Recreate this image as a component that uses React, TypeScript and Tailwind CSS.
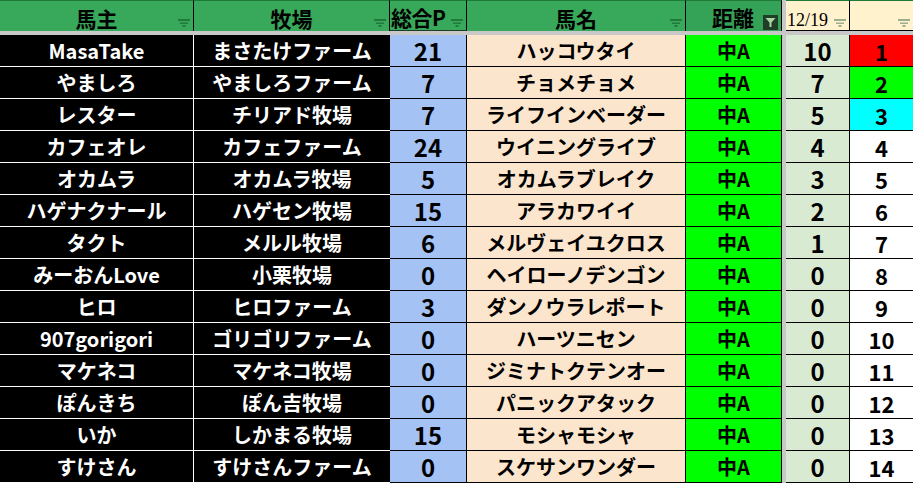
import React from "react";

const rows: [string, string, string, string, string, string][] = [
  ["MasaTake", "まさたけファーム", "21", "ハッコウタイ", "10", "1"],
  ["やましろ", "やましろファーム", "7", "チョメチョメ", "7", "2"],
  ["レスター", "チリアド牧場", "7", "ライフインベーダー", "5", "3"],
  ["カフェオレ", "カフェファーム", "24", "ウイニングライブ", "4", "4"],
  ["オカムラ", "オカムラ牧場", "5", "オカムラブレイク", "3", "5"],
  ["ハゲナクナール", "ハゲセン牧場", "15", "アラカワイイ", "2", "6"],
  ["タクト", "メルル牧場", "6", "メルヴェイユクロス", "1", "7"],
  ["みーおんLove", "小栗牧場", "0", "ヘイローノデンゴン", "0", "8"],
  ["ヒロ", "ヒロファーム", "3", "ダンノウラレポート", "0", "9"],
  ["907gorigori", "ゴリゴリファーム", "0", "ハーツニセン", "0", "10"],
  ["マケネコ", "マケネコ牧場", "0", "ジミナトクテンオー", "0", "11"],
  ["ぽんきち", "ぽん吉牧場", "0", "パニックアタック", "0", "12"],
  ["いか", "しかまる牧場", "15", "モシャモシャ", "0", "13"],
  ["すけさん", "すけさんファーム", "0", "スケサンワンダー", "0", "14"],
];

const FONT = { fontFamily: '"Noto Sans CJK JP", "Noto Sans", sans-serif' };

function Filter({ color }: { color: string }) {
  return (
    <svg width="12" height="8" viewBox="0 0 12 8" className="absolute right-[3px] top-[18px]">
      <rect x="0" y="0" width="12" height="2" fill={color} />
      <rect x="2" y="3.5" width="8" height="1.5" fill={color} />
      <rect x="4.5" y="6" width="3" height="2" fill={color} />
    </svg>
  );
}

function FilterButton() {
  return (
    <div className="absolute right-[3px] top-[14px] w-[15px] h-[15px] bg-[#1f3d27] flex items-center justify-center">
      <svg width="11" height="11" viewBox="0 0 11 11">
        <path d="M0.5 1 H10.5 L6.5 5.5 V10 H4.5 V5.5 Z" fill="#a8d5a2" />
      </svg>
    </div>
  );
}

const grid = "grid grid-cols-[194px_196px_77px_219px_96px_4px_64px_63px]";

export default function App() {
  const lastBg = (i: number) =>
    i === 0 ? "bg-[#ff0000]" : i === 1 ? "bg-[#00ff00]" : i === 2 ? "bg-[#00ffff]" : "bg-white";
  return (
    <div className="w-[913px] h-[483px] overflow-hidden bg-white font-bold" style={FONT}>
      {/* header */}
      <div className={`${grid} h-[31px] text-[21px] text-black`}>
        <div className="relative bg-[#38a95b] border-t border-[#1f7a3a] border-r border-r-black flex items-center justify-center leading-none pt-[4px]">
          馬主
          <Filter color="#23783c" />
        </div>
        <div className="relative bg-[#38a95b] border-t border-[#1f7a3a] border-r border-r-black flex items-center justify-center leading-none pt-[4px]">
          牧場
          <Filter color="#23783c" />
        </div>
        <div className="relative bg-[#38a95b] border-t border-[#1f7a3a] border-r border-r-black border-b border-b-[#1f3d27] flex items-center justify-start pl-[1px] leading-none pt-[4px] tracking-[-0.5px]">
          総合P
          <Filter color="#23783c" />
        </div>
        <div className="relative bg-[#38a95b] border-t border-[#1f7a3a] border-r border-r-black flex items-center justify-center leading-none pt-[4px]">
          馬名
          <Filter color="#23783c" />
        </div>
        <div className="relative bg-[#35a357] border-t border-[#1f7a3a] border-r border-r-black flex items-center justify-start pl-[26px] leading-none pt-[3px]">
          距離
          <FilterButton />
        </div>
        <div className="bg-[#c8c8c8]" />
        <div
          className="relative bg-[#fff2cc] border-t border-[#1f7a3a] border-r border-r-black border-b border-b-black flex items-center pl-[1px] pt-[8px] text-[18px] font-normal text-black leading-none"
          style={{ fontFamily: '"Liberation Serif", serif' }}
        >
          12/19
          <Filter color="#9fae8e" />
        </div>
        <div className="relative bg-[#fff2cc] border-t border-[#1f7a3a] border-b border-b-black">
          <Filter color="#9fae8e" />
        </div>
      </div>
      <div className="h-[4px] bg-[#c8c8c8]" />
      {rows.map((r, i) => (
        <div key={i} className={`${grid} h-[32px] leading-none`}>
          <div className="bg-black text-white border-b border-white border-r border-r-white flex items-center justify-center text-[20px] pt-[1px]">
            {r[0]}
          </div>
          <div className="bg-black text-white border-b border-white flex items-center justify-center text-[20px] pt-[1px]">
            {r[1]}
          </div>
          <div className="bg-[#a4c2f4] text-black border-b border-black border-r border-r-black flex items-center justify-center text-[24px]">
            {r[2]}
          </div>
          <div className="bg-[#fce5cd] text-black border-b border-black border-r border-r-black flex items-center justify-center text-[20px] pt-[1px]">
            {r[3]}
          </div>
          <div className="bg-[#00ff00] text-black border-b border-black border-r border-r-black flex items-center justify-center text-[20px] pt-[1px]">
            中A
          </div>
          <div className="bg-[#c8c8c8]" />
          <div className="bg-[#d9ead3] text-black border-b border-black border-r border-r-black flex items-center justify-center text-[24px]">
            {r[4]}
          </div>
          <div className={`${lastBg(i)} text-black border-b border-black flex items-center justify-center text-[22px]`}>
            {r[5]}
          </div>
        </div>
      ))}
    </div>
  );
}
